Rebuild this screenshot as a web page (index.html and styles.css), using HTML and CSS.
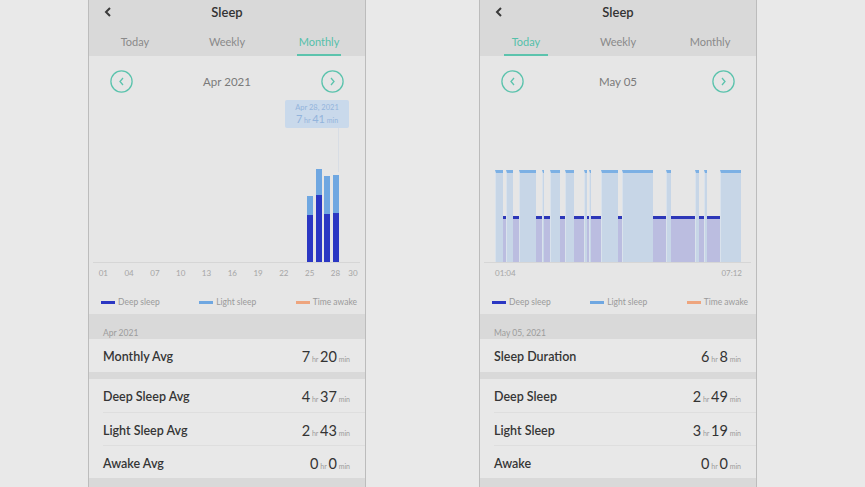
FILE: index.html
```html
<!DOCTYPE html>
<html>
<head>
<meta charset="utf-8">
<link rel="stylesheet" href="styles.css">
</head>
<body>
<div class="stage">
  <section class="phone">
    <header class="hdr">
      <div class="titlebar">
        <svg class="back" width="8" height="10" viewBox="0 0 8 10"><path d="M6 1 L2 5 L6 9" fill="none" stroke="#3a3a3a" stroke-width="2"/></svg>
        <h1>Sleep</h1>
      </div>
      <nav class="tabs">
        <div class="tab"><span>Today</span></div>
        <div class="tab"><span>Weekly</span></div>
        <div class="tab"><span class="on">Monthly</span></div>
      </nav>
    </header>
    <div class="card">
      <div class="datenav">
        <svg class="circ" width="23" height="23" viewBox="0 0 23 23"><circle cx="11.5" cy="11.5" r="10.6" fill="none" stroke="#5cc3ad" stroke-width="1.3"/><path d="M13 8 L10 11.5 L13 15" fill="none" stroke="#5cc3ad" stroke-width="1.3"/></svg>
        <span class="dlabel">Apr 2021</span>
        <svg class="circ" width="23" height="23" viewBox="0 0 23 23"><circle cx="11.5" cy="11.5" r="10.6" fill="none" stroke="#5cc3ad" stroke-width="1.3"/><path d="M10 8 L13 11.5 L10 15" fill="none" stroke="#5cc3ad" stroke-width="1.3"/></svg>
      </div>
      <div class="chart">
        <div class="tip">
          <div class="tip-date">Apr 28, 2021</div>
          <div class="tip-val"><b>7</b> hr <b>41</b> min</div>
        </div>
        <div class="tipline"></div>
        <div class="mgrid">
          <div class="bar" style="grid-column:25"><i class="lt" style="height:19px"></i><i class="dp" style="height:47px"></i></div>
          <div class="bar" style="grid-column:26"><i class="lt" style="height:26px"></i><i class="dp" style="height:67px"></i></div>
          <div class="bar" style="grid-column:27"><i class="lt" style="height:38px"></i><i class="dp" style="height:48px"></i></div>
          <div class="bar" style="grid-column:28"><i class="lt" style="height:38px"></i><i class="dp" style="height:49px"></i></div>
        </div>
      </div>
      <div class="axis mgrid">
        <span style="grid-column:1">01</span>
        <span style="grid-column:4">04</span>
        <span style="grid-column:7">07</span>
        <span style="grid-column:10">10</span>
        <span style="grid-column:13">13</span>
        <span style="grid-column:16">16</span>
        <span style="grid-column:19">19</span>
        <span style="grid-column:22">22</span>
        <span style="grid-column:25">25</span>
        <span style="grid-column:28">28</span>
        <span style="grid-column:30">30</span>
      </div>
      <div class="legend">
        <span><i class="mk deep"></i>Deep sleep</span>
        <span><i class="mk light"></i>Light sleep</span>
        <span><i class="mk awake"></i>Time awake</span>
      </div>
    </div>
    <div class="band">Apr 2021</div>
    <div class="row main"><span class="lbl">Monthly Avg</span><span class="val"><b>7</b> hr <b>20</b> min</span></div>
    <div class="gap"></div>
    <div class="list">
      <div class="row"><span class="lbl">Deep Sleep Avg</span><span class="val"><b>4</b> hr <b>37</b> min</span></div>
      <div class="row"><span class="lbl">Light Sleep Avg</span><span class="val"><b>2</b> hr <b>43</b> min</span></div>
      <div class="row"><span class="lbl">Awake Avg</span><span class="val"><b>0</b> hr <b>0</b> min</span></div>
    </div>
    <div class="gap end"></div>
  </section>

  <section class="phone">
    <header class="hdr">
      <div class="titlebar">
        <svg class="back" width="8" height="10" viewBox="0 0 8 10"><path d="M6 1 L2 5 L6 9" fill="none" stroke="#3a3a3a" stroke-width="2"/></svg>
        <h1>Sleep</h1>
      </div>
      <nav class="tabs">
        <div class="tab"><span class="on">Today</span></div>
        <div class="tab"><span>Weekly</span></div>
        <div class="tab"><span>Monthly</span></div>
      </nav>
    </header>
    <div class="card">
      <div class="datenav">
        <svg class="circ" width="23" height="23" viewBox="0 0 23 23"><circle cx="11.5" cy="11.5" r="10.6" fill="none" stroke="#5cc3ad" stroke-width="1.3"/><path d="M13 8 L10 11.5 L13 15" fill="none" stroke="#5cc3ad" stroke-width="1.3"/></svg>
        <span class="dlabel">May 05</span>
        <svg class="circ" width="23" height="23" viewBox="0 0 23 23"><circle cx="11.5" cy="11.5" r="10.6" fill="none" stroke="#5cc3ad" stroke-width="1.3"/><path d="M10 8 L13 11.5 L10 15" fill="none" stroke="#5cc3ad" stroke-width="1.3"/></svg>
      </div>
      <div class="chart">
        <div class="day">
          <i class="L" style="flex:23"></i><i class="D" style="flex:10"></i>
          <i class="L" style="flex:17"></i><i class="D" style="flex:20"></i>
          <i class="L" style="flex:53"></i><i class="D" style="flex:17"></i>
          <i class="L" style="flex:4"></i><i class="D" style="flex:18"></i>
          <i class="L" style="flex:31"></i><i class="D" style="flex:15"></i>
          <i class="L" style="flex:27"></i><i class="D" style="flex:30"></i>
          <i class="L" style="flex:6"></i><i class="D" style="flex:9"></i>
          <i class="L" style="flex:3"></i><i class="D" style="flex:32"></i>
          <i class="L" style="flex:50"></i><i class="D" style="flex:13"></i>
          <i class="L" style="flex:95"></i><i class="D" style="flex:43"></i>
          <i class="L" style="flex:12"></i><i class="D" style="flex:77"></i>
          <i class="L" style="flex:10"></i><i class="D" style="flex:16"></i>
          <i class="L" style="flex:5"></i><i class="D" style="flex:44"></i>
          <i class="L" style="flex:63"></i>
        </div>
      </div>
      <div class="axis times"><span>01:04</span><span>07:12</span></div>
      <div class="legend">
        <span><i class="mk deep"></i>Deep sleep</span>
        <span><i class="mk light"></i>Light sleep</span>
        <span><i class="mk awake"></i>Time awake</span>
      </div>
    </div>
    <div class="band">May 05, 2021</div>
    <div class="row main"><span class="lbl">Sleep Duration</span><span class="val"><b>6</b> hr <b>8</b> min</span></div>
    <div class="gap"></div>
    <div class="list">
      <div class="row"><span class="lbl">Deep Sleep</span><span class="val"><b>2</b> hr <b>49</b> min</span></div>
      <div class="row"><span class="lbl">Light Sleep</span><span class="val"><b>3</b> hr <b>19</b> min</span></div>
      <div class="row"><span class="lbl">Awake</span><span class="val"><b>0</b> hr <b>0</b> min</span></div>
    </div>
    <div class="gap end"></div>
  </section>
</div>
</body>
</html>
```

FILE: styles.css
```css
* { box-sizing: border-box; }
html, body { margin: 0; height: 487px; overflow: hidden; }
body {
  background: #e9e9e9;
  font-family: Lato, "Open Sans", "Liberation Sans", sans-serif;
  color: #333;
}
.stage {
  display: flex;
  gap: 113px;
  padding-left: 88px;
  height: 487px;
}
.phone {
  width: 278px;
  height: 487px;
  border-left: 1px solid #bcbcbc;
  border-right: 1px solid #bcbcbc;
  background: #e6e6e6;
  display: flex;
  flex-direction: column;
  overflow: hidden;
}

/* header */
.hdr { background: #d9d9d9; height: 56px; }
.titlebar {
  position: relative;
  height: 24px;
  display: flex;
  align-items: center;
  justify-content: center;
}
.titlebar .back { position: absolute; left: 15px; top: 7px; }
.titlebar h1 {
  margin: 0;
  font-size: 13px;
  font-weight: 600;
  color: #333;
  line-height: 16px;
}
.tabs { display: flex; height: 32px; }
.tab { flex: 1; display: flex; justify-content: center; }
.tab span {
  display: block;
  height: 32px;
  padding: 10px 2px 4px;
  line-height: 16px;
  font-size: 11px;
  color: #8a8a8a;
  border-bottom: 2px solid transparent;
  min-width: 44px;
  text-align: center;
}
.tab span.on { color: #55c0aa; border-bottom-color: #5cc3ad; }

/* card */
.card { height: 259px; display: flex; flex-direction: column; }
.datenav {
  display: flex;
  align-items: center;
  justify-content: space-between;
  padding: 14px 21px 0 21px;
  height: 37px;
}
.circ { display: block; }
.dlabel { font-size: 11.5px; color: #7a7a7a; line-height: 23px; }

.chart {
  position: relative;
  height: 170px;
  margin: 0 5px 0 4px;
  border-bottom: 1px solid #d6d6d6;
  display: flex;
  flex-direction: column;
  justify-content: flex-end;
}
.mgrid {
  display: grid;
  grid-template-columns: repeat(30, 1fr);
  padding: 0 2.4px 0 5.7px;
  align-items: end;
}
.chart .mgrid { height: 100%; }
.bar {
  display: flex;
  flex-direction: column;
  align-items: center;
  grid-row: 1;
}
.bar i { display: block; width: 6px; }
.bar i.lt { background: #6fa7e1; }
.bar i.dp { background: #2b37c3; }

.tip {
  position: absolute;
  left: 192px;
  top: 7px;
  width: 64px;
  height: 28px;
  background: #c9d9eb;
  border-radius: 2px;
  color: #93b4dc;
  text-align: center;
  padding-top: 3px;
}
.tip-date { font-size: 7.5px; line-height: 10px; }
.tip-val { font-size: 7px; line-height: 12px; }
.tip-val b { font-size: 11px; font-weight: 400; }
.tipline {
  position: absolute;
  left: 245px;
  top: 35px;
  width: 1px;
  height: 44px;
  background: #d8dde4;
}

.axis {
  margin: 0 5px 0 4px;
  padding-top: 5px;
  height: 17px;
  font-size: 8px;
  line-height: 11px;
  color: #a5a5a5;
}
.axis.mgrid { align-items: start; }
.axis.mgrid span { justify-self: center; white-space: nowrap; }
.axis.times {
  display: flex;
  justify-content: space-between;
  padding-left: 11px;
  padding-right: 9px;
}

.legend {
  display: flex;
  justify-content: space-between;
  padding: 16px 8px 0 12px;
  font-size: 8.5px;
  line-height: 12px;
  color: #9a9a9a;
}
.legend span { display: flex; align-items: center; white-space: nowrap; }
.mk { display: inline-block; width: 14px; height: 3px; margin-right: 3px; }
.mk.deep { background: #2b37c3; }
.mk.light { background: #6fa7e1; }
.mk.awake { background: #eea57e; }

/* day chart */
.day {
  display: flex;
  align-items: flex-end;
  height: 100%;
  padding: 0 10px 0 11px;
}
.day i { display: block; min-width: 0; }
.day i.L {
  height: 92px;
  background: #c7d6e7;
  border-top: 3px solid #7cb0e4;
  border-left: 0.5px solid #d9e2ec;
}
.day i.D {
  height: 46px;
  background: #bbbde0;
  border-top: 3px solid #2d37b8;
}

/* lower */
.band {
  height: 25px;
  background: #d9d9d9;
  padding: 13px 14px 0;
  font-size: 8.5px;
  line-height: 12px;
  color: #9c9c9c;
}
.row {
  height: 33px;
  display: flex;
  align-items: center;
  justify-content: space-between;
  padding: 2px 15px 0 14px;
  background: #e8e8e8;
}
.lbl { font-size: 12.5px; font-weight: 600; color: #353535; }
.val { font-size: 7px; color: #9a9a9a; }
.val b { font-size: 14.5px; font-weight: 400; color: #333; }
.gap { height: 7px; background: #d9d9d9; }
.gap.end { height: 9px; }
.list { background: #e8e8e8; }
.list .row { position: relative; }
.list .row + .row { border-top: 1px solid #dedede; margin-left: 14px; padding-left: 0; }
```
